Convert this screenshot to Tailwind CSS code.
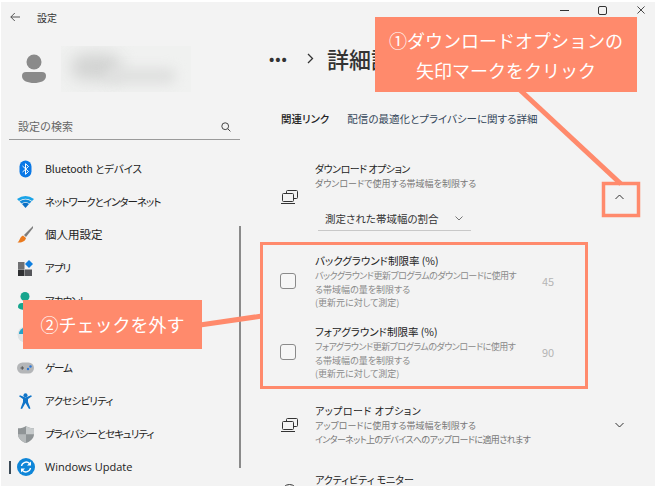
<!DOCTYPE html>
<html lang="ja">
<head>
  <meta charset="UTF-8">
  <title>設定</title>
  <script src="https://cdn.jsdelivr.net/npm/@tailwindcss/browser@4"></script>
</head>
<body class="bg-white">
  <div class="relative w-[655px] h-[486px] overflow-hidden flex bg-[#f3f3f3] border-t-2 border-l border-white font-['Noto_Sans_CJK_JP','Noto_Sans',sans-serif] text-[#1c1c1c] [font-feature-settings:'palt']">

    <!-- Sidebar -->
    <aside class="w-[239px] shrink-0 flex flex-col">
      <div class="h-[30px] flex items-center pl-[9px] gap-[17px]">
        <svg class="w-[10px] h-[10px]" viewBox="0 0 10 10" fill="none" stroke="#444" stroke-width="0.9"><path d="M10 5H.8M4.800 1 .8 5l4 4"/></svg>
        <span class="text-[10px] text-[#333]">設定</span>
      </div>
      <div class="h-[47px] mt-[13px] flex items-center">
        <svg class="w-[26px] h-[30px] ml-[20px]" viewBox="0 0 26 30" fill="#8a8a8a"><circle cx="13" cy="8" r="7.5"/><path d="M1 22a4 4 0 0 1 4-4h16a4 4 0 0 1 4 4c0 5-6 7-12 7S1 27 1 22z"/></svg>
        <div class="relative ml-[14px] w-[130px] h-[46px] bg-[#f0f1f0] overflow-hidden">
          <div class="absolute left-[10px] top-[8px] w-[50px] h-[26px] rounded-full bg-[#d2d3d2] blur-[8px]"></div>
          <div class="absolute left-[45px] top-[22px] w-[70px] h-[16px] rounded-full bg-[#dfe0df] blur-[6px]"></div>
        </div>
      </div>
      <div class="ml-[8px] w-[231px] h-[26px] mt-[22px] flex items-center justify-between border-b border-[#9a9a9a] pl-[9px] pr-[9px]">
        <span class="text-[11px] text-[#666] [font-feature-settings:normal]">設定の検索</span>
        <svg class="w-[10px] h-[10px]" viewBox="0 0 10 10" fill="none" stroke="#444" stroke-width="1"><circle cx="4.2" cy="4.2" r="3.4"/><path d="m6.8 6.8 2.6 2.6"/></svg>
      </div>
      <nav class="mt-[12px] flex flex-col text-[10.5px] text-[#222] tracking-[-1px]">
        <div class="h-[33.2px] flex items-center pl-[17px] gap-[12px]">
          <svg class="w-[15px] h-[18px] shrink-0" viewBox="0 0 15 18"><rect x="1.5" y="0.5" width="12" height="17" rx="6" fill="#0a78e6"/><path d="m4.5 6 6 5.500-3 2.800V3.700l3 2.800-6 5.500" fill="none" stroke="#fff" stroke-width="1"/></svg>
          <span class="tracking-[-0.1px]">Bluetooth とデバイス</span>
        </div>
        <div class="h-[33.2px] flex items-center pl-[16px] gap-[11px]">
          <svg class="w-[17px] h-[14px] shrink-0" viewBox="0 0 17 14"><path d="M0 4q8.500-6 17 0l-2 2q-6.500-4.500-13 0z" fill="#1aa4e8"/><path d="M2.500 6.500q6-4 12 0l-2 2q-4-3-8 0z" fill="#1489d8"/><path d="M5 9q3.500-2.500 7 0l-3.500 4z" fill="#0a6fc4"/></svg>
          <span>ネットワークとインターネット</span>
        </div>
        <div class="h-[33.2px] flex items-center pl-[16px] gap-[11px]">
          <svg class="w-[17px] h-[17px] shrink-0" viewBox="0 0 17 17"><path d="M16 0 7 9l2 2 7-9z" fill="#7d7d7d"/><path d="M6 9.500 9 12c-.5 3-4 5-8.500 4.500C3 15 2.500 11 6 9.500z" fill="#ea7a1e"/></svg>
          <span class="text-[11.5px] tracking-normal">個人用設定</span>
        </div>
        <div class="h-[33.2px] flex items-center pl-[16px] gap-[11px]">
          <svg class="w-[17px] h-[17px] shrink-0" viewBox="0 0 17 17"><rect x="1" y="2" width="6.500" height="7" fill="#6f7072"/><rect x="1" y="9.500" width="6.500" height="6.500" fill="#2f3032"/><rect x="8" y="9.500" width="7" height="6.500" fill="#55565a"/><path d="M12 0l4 4-4 4-4-4z" fill="#0f7fe0"/></svg>
          <span>アプリ</span>
        </div>
        <div class="h-[33.2px] flex items-center pl-[16px] gap-[11px]">
          <svg class="w-[17px] h-[18px] shrink-0" viewBox="0 0 17 18"><circle cx="8" cy="4.500" r="4.500" fill="#17a58e"/><path d="M1 15a4 4 0 0 1 4-4h7a4 4 0 0 1 4 4c0 2-4 3-7.500 3S1 17 1 15z" fill="#17a58e"/></svg>
          <span>アカウント</span>
        </div>
        <div class="h-[33.2px] flex items-center pl-[16px] gap-[11px]">
          <svg class="w-[17px] h-[17px] shrink-0" viewBox="0 0 17 17"><circle cx="8.500" cy="8.500" r="8" fill="#dfe3e5"/><path d="M2 8a6.500 6.500 0 0 1 13 0z" fill="#23a3c9"/></svg>
          <span>時刻と言語</span>
        </div>
        <div class="h-[33.2px] flex items-center pl-[16px] gap-[11px]">
          <svg class="w-[17px] h-[12px] shrink-0" viewBox="0 0 17 12"><rect y="0.500" width="17" height="11" rx="5.500" fill="#b4b6b8"/><path d="M3.500 6h3.500M5.250 4.250v3.500" stroke="#555" stroke-width="1"/><circle cx="11" cy="7" r="1.200" fill="#2a78d8"/><circle cx="13.500" cy="4.500" r="1.200" fill="#2a78d8"/></svg>
          <span>ゲーム</span>
        </div>
        <div class="h-[33.2px] flex items-center pl-[18px] gap-[13px]">
          <svg class="w-[13px] h-[16px] shrink-0" viewBox="0 0 13 16" fill="#0f74c8"><circle cx="6.500" cy="2.200" r="2"/><path d="M0 3.200l1-1 5.500 2.300L12 2.200l1 1-4 2.800V9l2.500 6.500-1.500.5-3.500-6-3.500 6-1.500-.5L4 9V6z"/></svg>
          <span class="tracking-[-0.75px]">アクセシビリティ</span>
        </div>
        <div class="h-[33.2px] flex items-center pl-[17px] gap-[11px]">
          <svg class="w-[16px] h-[17px] shrink-0" viewBox="0 0 16 17"><path d="M8 0c2 1.500 5 2.300 8 2.300v6C16 12.500 12 16 8 17 4 16 0 12.500 0 8.300v-6C3 2.300 6 1.500 8 0z" fill="#8f9496"/><path d="M8 0c2 1.500 5 2.300 8 2.300v6H8z" fill="#c6cacb"/><path d="M8 8.300H0C0 12.500 4 16 8 17z" fill="#b5b9ba"/></svg>
          <span>プライバシーとセキュリティ</span>
        </div>
        <div class="relative h-[33.2px] flex items-center pl-[16px] gap-[10px]">
          <span class="absolute left-[8px] top-[10px] w-[2px] h-[13px] bg-[#3b4a57]"></span>
          <svg class="w-[18px] h-[18px] shrink-0" viewBox="0 0 18 18"><circle cx="9" cy="9" r="9" fill="#0f86d8"/><path d="M4.500 8a4.700 4.700 0 0 1 8-2.500l1 1M13.500 10a4.700 4.700 0 0 1-8 2.500l-1-1" fill="none" stroke="#fff" stroke-width="1.400"/><path d="M14 3.500v4h-4zM4 14.500v-4h4z" fill="#fff"/></svg>
          <span class="font-['Open_Sans','Noto_Sans',sans-serif] text-[11px] tracking-normal">Windows Update</span>
        </div>
      </nav>
    </aside>

    <!-- Main pane -->
    <main class="flex-1 min-w-0 flex flex-col pl-[41px]">
      <div class="h-[16px] shrink-0 flex items-center justify-end pr-[10px] text-[#333]">
        <span class="w-[9px] h-px bg-[#333]"></span>
        <span class="w-[9px] h-[9px] border border-[#333] rounded-[2px] ml-[29px]"></span>
        <svg class="w-[8px] h-[8px] ml-[30px]" viewBox="0 0 9 9" fill="none" stroke="#333" stroke-width="1"><path d="m.5.500 8 8M8.500.500l-8 8"/></svg>
      </div>
      <div class="h-[38px] shrink-0 mt-[21px] flex items-center -ml-[12px] text-[#333]">
        <span class="text-[14px] font-bold tracking-[1px]">•••</span>
        <svg class="w-[7px] h-[11px] ml-[19px]" viewBox="0 0 7 11" fill="none" stroke="#333" stroke-width="1.300"><path d="m1 1 4.500 4.500L1 10"/></svg>
        <span class="ml-[13px] text-[22px] font-medium text-[#333] [font-feature-settings:normal]">詳細設定</span>
      </div>
      <div class="h-[16px] shrink-0 mt-[34px] flex items-center">
        <span class="text-[10.500px] font-medium text-[#222]">関連リンク</span>
        <span class="ml-[18px] text-[10.500px] text-[#33465a]">配信の最適化とプライバシーに関する詳細</span>
      </div>

      <section class="mt-[34px] h-[70px] shrink-0 flex items-center relative">
        <svg class="w-[17px] h-[14px] shrink-0 mt-[2px]" viewBox="0 0 17 14" fill="none" stroke="#333" stroke-width="1"><rect x="5.500" y="0.500" width="11" height="8" rx="1"/><rect x="1.500" y="3.500" width="11" height="8" rx="1" fill="#f3f3f3"/><path d="M0 13.500h14"/></svg>
        <div class="ml-[17px] self-start">
          <div class="h-[16px] text-[10px] leading-[15px] text-[#222] tracking-[-0.5px]">ダウンロード オプション</div>
          <div class="h-[14px] text-[9px] leading-[14px] text-[#777]">ダウンロードで使用する帯域幅を制限する</div>
          <div class="mt-[16px] ml-[3px] w-[153px] h-[24px] flex items-center justify-between border-b border-[#c8c8c8] pl-[7px] pr-[8px]">
            <span class="text-[10.500px] text-[#333]">測定された帯域幅の割合</span>
            <svg class="w-[8px] h-[5px]" viewBox="0 0 8 5" fill="none" stroke="#666" stroke-width="0.900"><path d="m.5.500 3.500 3.500L7.500.500"/></svg>
          </div>
        </div>
        <svg class="absolute left-[334px] top-[33px] w-[9px] h-[6px]" viewBox="0 0 9 6" fill="none" stroke="#333" stroke-width="1"><path d="M.5 5 4.500 1l4 4"/></svg>
      </section>

      <section class="mt-[23px] h-[56px] shrink-0 flex items-center">
        <span class="w-[16px] h-[16px] shrink-0 -ml-px mb-[2px] rounded-[3px] border border-[#8a8a8a] bg-[#f6f6f6]"></span>
        <div class="ml-[19px] w-[212px]">
          <div class="h-[15px] text-[10.500px] leading-[14px] text-[#222]">バックグラウンド制限率 (%)</div>
          <div class="text-[9px] leading-[13.500px] text-[#8a8a8a]"><span class="tracking-[-0.5px]">バックグラウンド更新プログラムのダウンロードに使用す</span><br>る帯域幅の量を制限する<br>(更新元に対して測定)</div>
        </div>
        <span class="ml-[15px] mb-[2px] text-[11px] text-[#b5b5b5]">45</span>
      </section>
      <section class="mt-[15px] h-[56px] shrink-0 flex items-center">
        <span class="w-[16px] h-[16px] shrink-0 -ml-px mb-[2px] rounded-[3px] border border-[#8a8a8a] bg-[#f6f6f6]"></span>
        <div class="ml-[19px] w-[212px]">
          <div class="h-[15px] text-[10.500px] leading-[14px] text-[#222]">フォアグラウンド制限率 (%)</div>
          <div class="text-[9px] leading-[13.500px] text-[#8a8a8a]"><span class="tracking-[-0.5px]">フォアグラウンド更新プログラムのダウンロードに使用す</span><br>る帯域幅の量を制限する<br>(更新元に対して測定)</div>
        </div>
        <span class="ml-[15px] mb-[2px] text-[11px] text-[#b5b5b5]">90</span>
      </section>

      <section class="mt-[23px] h-[42px] shrink-0 flex items-center">
        <svg class="w-[17px] h-[14px] shrink-0" viewBox="0 0 17 14" fill="none" stroke="#333" stroke-width="1"><rect x="5.500" y="0.500" width="11" height="8" rx="1"/><rect x="1.500" y="3.500" width="11" height="8" rx="1" fill="#f3f3f3"/><path d="M0 13.500h14"/></svg>
        <div class="ml-[17px] w-[300px]">
          <div class="h-[15px] text-[10px] leading-[14px] text-[#222] tracking-[0.5px]">アップロード オプション</div>
          <div class="text-[9px] leading-[13.500px] text-[#777]">アップロードに使用する帯域幅を制限する<br><span class="tracking-[-0.6px]">インターネット上のデバイスへのアップロードに適用されます</span></div>
        </div>
        <svg class="w-[9px] h-[6px]" viewBox="0 0 9 6" fill="none" stroke="#333" stroke-width="1"><path d="M.5 1l4 4 4-4"/></svg>
      </section>

      <section class="mt-[27px] shrink-0 flex">
        <svg class="w-[17px] h-[17px] shrink-0 mt-[7px]" viewBox="0 0 17 17" fill="none" stroke="#333" stroke-width="1"><path d="M1 12a7.500 7.500 0 0 1 15 0M8.500 12 11 6"/></svg>
        <div class="ml-[17px] text-[10px] leading-[14px] text-[#222]">アクティビティ モニター</div>
      </section>
    </main>

    <!-- Scrollbar over the sidebar edge -->
    <div class="absolute left-[238px] top-[224px] w-[2px] h-[242px] bg-[#8a8a8a]"></div>

    <!-- Annotation layer -->
    <svg class="absolute -left-px -top-[2px] w-[655px] h-[486px] pointer-events-none" viewBox="0 0 655 486" fill="none" stroke="#ff8a6c">
      <path d="M520 90 621 184" stroke-width="5"/>
      <path d="M200 325 262 316" stroke-width="5"/>
      <rect x="603.500" y="183.500" width="35" height="32" stroke-width="3.500"/>
      <rect x="261.500" y="243.500" width="325" height="144" stroke-width="3"/>
    </svg>
    <div class="absolute left-[374px] top-[15px] w-[262px] h-[75px] bg-[#ff8a6c] flex flex-col items-center justify-center text-white text-[18px] leading-[30px] [font-feature-settings:normal]">
      <span>①ダウンロードオプションの</span>
      <span>矢印マークをクリック</span>
    </div>
    <div class="absolute left-[22px] top-[298px] w-[179px] h-[49px] bg-[#ff8a6c] flex items-center justify-center text-white text-[18px] [font-feature-settings:normal]">②チェックを外す</div>
  </div>
</body>
</html>
